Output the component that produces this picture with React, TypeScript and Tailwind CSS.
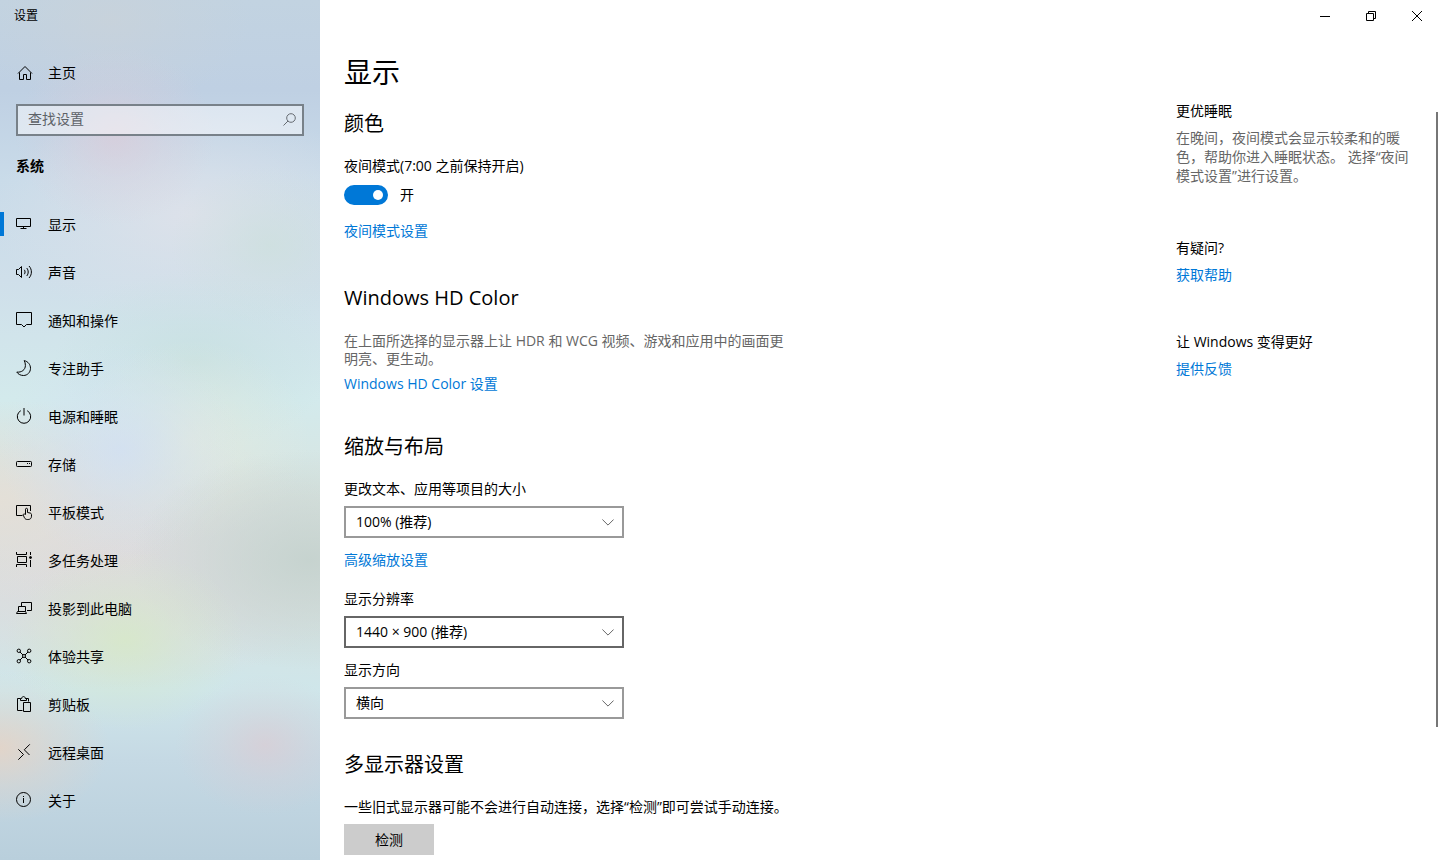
import { useState, type ReactNode } from 'react';
import clsx from 'clsx';

interface NavItem {
  id: string;
  label: string;
  icon: ReactNode;
}

interface SelectFieldProps {
  id: string;
  label: string;
  options: string[];
  active?: boolean;
}

function Icon({ children }: { children: ReactNode }) {
  return (
    <svg viewBox="0 0 16 16" className="h-4 w-4 shrink-0 overflow-visible" fill="none" stroke="currentColor" aria-hidden="true">
      {children}
    </svg>
  );
}

const navItems: NavItem[] = [
  {
    id: 'display',
    label: '显示',
    icon: <path d="M.5 2.500h14v8h-14zM7.500 10.500v2M4.500 12.500h6" />
  },
  {
    id: 'sound',
    label: '声音',
    icon: (
      <>
        <path d="M.5 5.500h2l3-3v11l-3-3h-2z" />
        <path d="M8.300 5.800c1 1.300 1 3.100 0 4.400M10.700 4c2 2.300 2 5.700 0 8M13 2c3.200 3.400 3.200 8.600 0 12" />
      </>
    )
  },
  {
    id: 'notifications',
    label: '通知和操作',
    icon: <path d="M.5.5h15v12h-5l-2.500 2.500-2.500-2.500h-5z" />
  },
  {
    id: 'focus',
    label: '专注助手',
    icon: <path d="M8.200.6c3.800.8 6.300 4 6.300 7.700 0 4-3.100 7.200-7 7.200-2.800 0-5.300-1.200-6.700-3.400 4.700.5 8.600-2.200 8.600-6.700 0-1.800-.4-3.400-1.200-4.800z" />
  },
  {
    id: 'power',
    label: '电源和睡眠',
    icon: <path d="M4.800 2.700a6.700 6.700 0 1 0 6.400 0M8 0v7.500" />
  },
  {
    id: 'storage',
    label: '存储',
    icon: (
      <>
        <rect x=".5" y="5.500" width="15" height="5" rx=".8" />
        <path d="M11 7.500h1M13 7.500h1" />
      </>
    )
  },
  {
    id: 'tablet',
    label: '平板模式',
    icon: (
      <>
        <path d="M6.500 11.500h-6v-10h14V7" />
        <path d="M9.500 10.500V5.200c0-1.200 2-1.200 2 0V8.500l2.500.5c1 .2 1.500.8 1.500 1.700v1.500c0 2-1.300 3.300-3.300 3.300h-.9c-1.300 0-2.200-.6-2.800-1.600l-1.200-2.700c-.4-1.200.9-1.800 1.500-.9z" />
      </>
    )
  },
  {
    id: 'multitask',
    label: '多任务处理',
    icon: (
      <>
        <path d="M.5 0v2.500h10V0M.5 15v-2.500h10V15M1.500 4.500v6h9v-6zM14.500 0v3M14.500 8v7" />
        <circle cx="14.500" cy="5.500" r="1" fill="currentColor" />
      </>
    )
  },
  {
    id: 'projecting',
    label: '投影到此电脑',
    icon: <path d="M5.500 6V2.500h10v8H11M2.500 11.500v-5h7v5M.5 13.500l1-2h8l1 2z" />
  },
  {
    id: 'shared',
    label: '体验共享',
    icon: (
      <>
        <circle cx="2.800" cy="2.800" r="1.700" />
        <circle cx="13.200" cy="2.800" r="1.700" />
        <circle cx="2.800" cy="13.200" r="1.700" />
        <circle cx="13.200" cy="13.200" r="1.700" />
        <circle cx="8" cy="8" r="1.500" />
        <path d="M4 4 7 7M9 9l3 3M12 4 9 7M7 9l-3 3" />
      </>
    )
  },
  {
    id: 'clipboard',
    label: '剪贴板',
    icon: <path d="M6.500 14.500h-5v-12h3M9.500 2.500h3v3M4.500 4.500v-2h1.200c0-2.600 3.600-2.600 3.600 0h1.200v2zM7.500 6.500h7v9h-7z" />
  },
  {
    id: 'remote',
    label: '远程桌面',
    icon: <path d="M13.800.3 8.300 5.800l5.200 5.200M2.300 5.300l5.200 5.200-5.200 5.200" />
  },
  {
    id: 'about',
    label: '关于',
    icon: (
      <>
        <circle cx="7.500" cy="7.500" r="7" />
        <path d="M7.500 4v1M7.500 6v5" />
      </>
    )
  }
];

function SectionTitle({ children }: { children: ReactNode }) {
  return <h2 className="text-xl leading-7">{children}</h2>;
}

function TextLink({ children }: { children: ReactNode }) {
  return (
    <a href="#" className="text-[#0078d7] hover:text-[#666666]">
      {children}
    </a>
  );
}

function SelectField({ id, label, options, active = false }: SelectFieldProps) {
  return (
    <div className="w-[280px]">
      <label htmlFor={id} className="block">
        {label}
      </label>
      <div className="relative mt-[7px]">
        <select
          id={id}
          className={clsx(
            'block h-8 w-full appearance-none border-2 bg-white pr-8 pl-[10px] outline-none',
            active ? 'border-[#666666]' : 'border-[#999999]'
          )}
        >
          {options.map((option) => (
            <option key={option}>{option}</option>
          ))}
        </select>
        <svg
          viewBox="0 0 12 7"
          className="pointer-events-none absolute top-[13px] right-[10px] h-[7px] w-3"
          fill="none"
          stroke="#666666"
          aria-hidden="true"
        >
          <path d="M.4.5 6 6.100 11.600.5" />
        </svg>
      </div>
    </div>
  );
}

function Sidebar() {
  const [current, setCurrent] = useState('display');

  return (
    <aside className="w-80 shrink-0 bg-[radial-gradient(100px_90px_at_115px_135px,#dccbd8aa,#dccbd844_50%,#dccbd800),radial-gradient(120px_90px_at_125px_640px,#d7e9c6cc,#d7e9c655_50%,#d7e9c600),radial-gradient(110px_75px_at_0px_748px,#e8d3c3cc,#e8d3c355_50%,#e8d3c300),radial-gradient(90px_70px_at_265px_745px,#dccbd2aa,#dccbd244_50%,#dccbd200),radial-gradient(180px_110px_at_310px_560px,#c5d2ceee,#c5d2ce77_50%,#c5d2ce00),radial-gradient(120px_110px_at_120px_450px,#d2e0f2dd,#d2e0f266_50%,#d2e0f200),radial-gradient(120px_100px_at_190px_440px,#e4eaddcc,#e4eadd55_50%,#e4eadd00),radial-gradient(140px_90px_at_195px_360px,#c7e0e0cc,#c7e0e055_50%,#c7e0e000),radial-gradient(200px_100px_at_0px_500px,#e5dfd6dd,#e5dfd666_50%,#e5dfd600),radial-gradient(100px_80px_at_270px_245px,#cce0dcaa,#cce0dc44_50%,#cce0dc00),radial-gradient(200px_110px_at_190px_215px,#dfe2eadd,#dfe2ea66_50%,#dfe2ea00),radial-gradient(260px_130px_at_110px_560px,#dddaddee,#dddadd88_50%,#dddadd00),radial-gradient(140px_90px_at_110px_20px,#c9d2dacc,#c9d2da55_50%,#c9d2da00),linear-gradient(to_bottom,#c2d3e1_0px,#bfd0e3_90px,#c9dbe9_180px,#cfdfea_280px,#d3eaec_400px,#d8e4e0_500px,#d7e2e1_600px,#cfe6ea_690px,#c5d9e4_760px,#b9cfdc_860px)]">
      <div className="flex h-8 items-center pl-[14px] text-xs">设置</div>
      <a href="#" className="mt-[17px] flex h-12 items-center gap-[15px] pl-[17px]">
        <Icon>
          <path d="M1 8.500 8 1.500l7 7M2.500 7.500v7h4v-5h3v5h4v-7" />
        </Icon>
        主页
      </a>
      <div className="relative mx-4 mt-[7px]">
        <input
          type="text"
          aria-label="查找设置"
          placeholder="查找设置"
          className="block h-8 w-full border-2 border-[#788189] bg-white/45 pr-8 pb-1 pl-[10px] outline-none placeholder:text-[#5d6268]"
        />
        <svg
          viewBox="0 0 13 13"
          className="pointer-events-none absolute top-[9px] right-2 h-[13px] w-[13px]"
          fill="none"
          stroke="#666b71"
          aria-hidden="true"
        >
          <circle cx="8" cy="5" r="4.300" />
          <path d="M5 8 .5 12.500" />
        </svg>
      </div>
      <h2 className="mt-5 px-4 font-bold">系统</h2>
      <nav className="mt-6">
        {navItems.map((item) => (
          <a
            key={item.id}
            href="#"
            onClick={() => setCurrent(item.id)}
            aria-current={current === item.id ? 'page' : undefined}
            className="flex h-12 items-center hover:bg-black/5"
          >
            <span className={clsx('h-6 w-1', current === item.id && 'bg-[#0078d7]')} />
            <span className="ml-3 flex items-center gap-4">
              <Icon>{item.icon}</Icon>
              <span className="pt-[2px]">{item.label}</span>
            </span>
          </a>
        ))}
      </nav>
    </aside>
  );
}

function WindowControls() {
  return (
    <div className="flex h-8 justify-end">
      <button type="button" aria-label="最小化" className="flex w-[46px] items-center justify-center hover:bg-black/10">
        <svg viewBox="0 0 10 10" className="h-[10px] w-[10px]" fill="none" stroke="currentColor">
          <path d="M0 5.500h10" />
        </svg>
      </button>
      <button type="button" aria-label="还原" className="flex w-[46px] items-center justify-center hover:bg-black/10">
        <svg viewBox="0 0 10 10" className="h-[10px] w-[10px]" fill="none" stroke="currentColor">
          <path d="M.5 2.500h7v7h-7zM2.500 2.500v-2h7v7h-2" />
        </svg>
      </button>
      <button type="button" aria-label="关闭" className="flex w-[46px] items-center justify-center hover:bg-black/10">
        <svg viewBox="0 0 10 10" className="h-[10px] w-[10px]" fill="none" stroke="currentColor">
          <path d="m0 0 10 10M10 0 0 10" />
        </svg>
      </button>
    </div>
  );
}

function DisplaySettings() {
  const [nightLight, setNightLight] = useState(true);

  return (
    <div className="min-w-0 flex-1">
      <h1 className="text-[28px] leading-9">显示</h1>

      <section className="mt-5">
        <SectionTitle>颜色</SectionTitle>
        <label htmlFor="night-light" className="mt-[18px] block">
          夜间模式(7:00 之前保持开启)
        </label>
        <div className="mt-[9px] flex items-center gap-3">
          <input
            id="night-light"
            type="checkbox"
            role="switch"
            checked={nightLight}
            onChange={(e) => setNightLight(e.target.checked)}
            className="flex h-5 w-11 appearance-none items-center rounded-full border-2 border-[#333333] px-[3px] before:h-[10px] before:w-[10px] before:rounded-full before:bg-[#333333] checked:justify-end checked:border-[#0078d7] checked:bg-[#0078d7] checked:before:bg-white"
          />
          <span>{nightLight ? '开' : '关'}</span>
        </div>
        <p className="mt-4">
          <TextLink>夜间模式设置</TextLink>
        </p>
      </section>

      <section className="mt-[43px]">
        <SectionTitle>Windows HD Color</SectionTitle>
        <p className="mt-5 max-w-[444px] leading-[18px] text-[#666666]">
          在上面所选择的显示器上让 HDR 和 WCG 视频、游戏和应用中的画面更明亮、更生动。
        </p>
        <p className="mt-[6px]">
          <TextLink>Windows HD Color 设置</TextLink>
        </p>
      </section>

      <section className="mt-[39px]">
        <SectionTitle>缩放与布局</SectionTitle>
        <div className="mt-[18px]">
          <SelectField id="scale" label="更改文本、应用等项目的大小" options={['100% (推荐)', '125%', '150%']} />
        </div>
        <p className="mt-3">
          <TextLink>高级缩放设置</TextLink>
        </p>
        <div className="mt-[19px] space-y-3">
          <SelectField id="resolution" label="显示分辨率" options={['1440 × 900 (推荐)', '1280 × 800', '1024 × 768']} active />
          <SelectField id="orientation" label="显示方向" options={['横向', '纵向', '横向(翻转)', '纵向(翻转)']} />
        </div>
      </section>

      <section className="mt-8">
        <SectionTitle>多显示器设置</SectionTitle>
        <p className="mt-[18px]">一些旧式显示器可能不会进行自动连接，选择“检测”即可尝试手动连接。</p>
        <button type="button" className="mt-[7px] h-[31px] w-[90px] bg-[#cccccc] hover:bg-[#b8b8b8]">
          检测
        </button>
      </section>
    </div>
  );
}

function HelpPanel() {
  return (
    <aside className="mt-[47px] w-[236px] shrink-0">
      <h3>更优睡眠</h3>
      <p className="mt-[7px] leading-[19px] text-[#666666]">
        在晚间，夜间模式会显示较柔和的暖色，帮助你进入睡眠状态。 选择“夜间模式设置”进行设置。
      </p>
      <h3 className="mt-[53px]">有疑问?</h3>
      <p className="mt-[7px]">
        <TextLink>获取帮助</TextLink>
      </p>
      <h3 className="mt-[47px]">让 Windows 变得更好</h3>
      <p className="mt-[7px]">
        <TextLink>提供反馈</TextLink>
      </p>
    </aside>
  );
}

export default function App() {
  return (
    <div
      lang="zh-CN"
      className="flex min-h-screen bg-white font-['Open_Sans','Noto_Sans_CJK_SC',sans-serif] text-sm leading-5 text-black"
    >
      <Sidebar />
      <main className="flex min-w-0 flex-1 flex-col">
        <WindowControls />
        <div className="flex flex-1 pr-[2px] pl-6">
          <div className="flex flex-1 gap-6 pt-[22px] pr-6">
            <DisplaySettings />
            <HelpPanel />
          </div>
          <div className="flex w-[2px] flex-col pt-20">
            <div className="flex-[615] bg-[#767676]" />
            <div className="flex-[133]" />
          </div>
        </div>
      </main>
    </div>
  );
}
